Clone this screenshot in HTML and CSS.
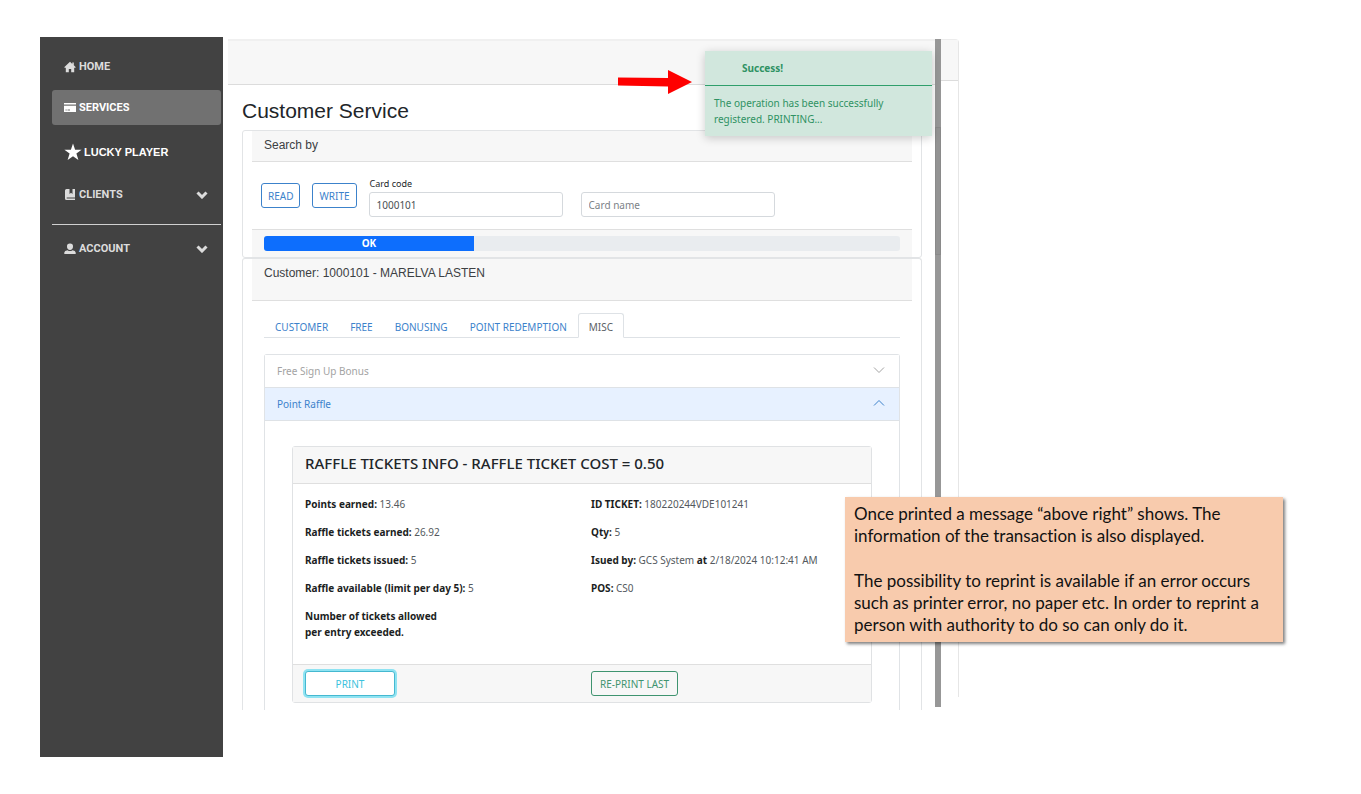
FILE: index.html
```html
<!DOCTYPE html>
<html lang="en">
<head>
<meta charset="utf-8">
<title>Customer Service</title>
<link rel="stylesheet" href="styles.css">
</head>
<body>
<div class="page">
  <nav class="sidebar">
    <a class="nav-item" href="#"><svg class="icon" viewBox="0 0 12 12"><path d="M6 .8 .2 6.200l.9.9.700-.600V11.200h3V8h2.400v3.200h3V6.500l.7.600.9-.9L9.800 4.200V1.500H8.300v1.400z"/></svg><span>HOME</span></a>
    <a class="nav-item active" href="#"><svg class="icon" viewBox="0 0 12 12"><path d="M0 1h12v1.600H0zM0 3.800h12V10H0zM1.500 7.500v1h1.200v-1zm2 0v1h2.500v-1z" fill-rule="evenodd"/></svg><span>SERVICES</span></a>
    <a class="nav-item lucky" href="#"><svg class="icon star" viewBox="0 0 18 18"><path d="M9 .5l2.100 6.200h6.500l-5.200 3.900 2 6.400L9 13.200 3.600 17l2-6.400L.4 6.700h6.500z"/></svg><span>LUCKY PLAYER</span></a>
    <a class="nav-item" href="#"><svg class="icon" viewBox="0 0 12 12"><path d="M2.500 0H5.500v5l1.500-1.200L8.500 5V0h2.500v8.500H2.700v1H11V11H2.500Q1 11 1 9.500v-8Q1 0 2.500 0z"/></svg><span>CLIENTS</span><svg class="chev" viewBox="0 0 12 8"><path d="M1.500 1.500 6 6l4.500-4.500"/></svg></a>
    <hr class="nav-line">
    <a class="nav-item" href="#"><svg class="icon" viewBox="0 0 12 12"><path d="M6 .5a3 3 0 0 1 3 3.200C9 5.500 7.800 7 6 7S3 5.500 3 3.700A3 3 0 0 1 6 .5zM.3 11V9.500Q.5 7.500 3.500 7.200 6 9 8.500 7.200q3 .3 3.200 2.300V11z"/></svg><span>ACCOUNT</span><svg class="chev" viewBox="0 0 12 8"><path d="M1.500 1.500 6 6l4.500-4.500"/></svg></a>
  </nav>

  <main class="app">
    <div class="content">
      <div class="topbar"></div>
      <h1 class="title">Customer Service</h1>
      <div class="stack">
        <section class="card">
          <h2 class="card-head">Search by</h2>
          <div class="search">
            <button class="btn blue" type="button">READ</button>
            <button class="btn blue" type="button">WRITE</button>
            <div class="field code-field">
              <label for="code">Card code</label>
              <input class="input" id="code" type="text" value="1000101">
            </div>
            <div class="field">
              <input class="input" type="text" placeholder="Card name" aria-label="Card name">
            </div>
          </div>
          <div class="card-foot"><div class="progress"><div class="bar" style="width:33%">OK</div></div></div>
        </section>

        <section class="card open">
          <h2 class="card-head tall">Customer: 1000101 - MARELVA LASTEN</h2>
          <div class="tabs">
            <a href="#">CUSTOMER</a><a href="#">FREE</a><a href="#">BONUSING</a><a href="#">POINT REDEMPTION</a><a class="current" href="#">MISC</a>
          </div>
          <div class="accordion">
            <button class="acc-head muted" type="button"><span>Free Sign Up Bonus</span><svg viewBox="0 0 12 8"><path d="M1 1.500 6 6.500l5-5"/></svg></button>
            <button class="acc-head selected" type="button"><span>Point Raffle</span><svg viewBox="0 0 12 8"><path d="M1 6.500 6 1.500l5 5"/></svg></button>
            <div class="acc-body">
              <div class="raffle">
                <h3 class="raffle-head">RAFFLE TICKETS INFO - RAFFLE TICKET COST = 0.50</h3>
                <div class="raffle-body">
                  <div class="facts">
                    <p><b>Points earned:</b> 13.46</p>
                    <p><b>Raffle tickets earned:</b> 26.92</p>
                    <p><b>Raffle tickets issued:</b> 5</p>
                    <p><b>Raffle available (limit per day 5):</b> 5</p>
                    <p><b>Number of tickets allowed<br>per entry exceeded.</b></p>
                  </div>
                  <div class="facts">
                    <p><b>ID TICKET:</b> 180220244VDE101241</p>
                    <p><b>Qty:</b> 5</p>
                    <p><b>Isued by:</b> GCS System <b>at</b> 2/18/2024 10:12:41 AM</p>
                    <p><b>POS:</b> CS0</p>
                  </div>
                </div>
                <div class="raffle-foot">
                  <div><button class="btn print" type="button">PRINT</button></div>
                  <div><button class="btn green" type="button">RE-PRINT LAST</button></div>
                </div>
              </div>
            </div>
          </div>
        </section>
      </div>

      <svg class="arrow" viewBox="0 0 74 24"><path d="M0 7.500 50 8V0l24 12-24 12v-7.500L0 15.500z"/></svg>
      <div class="toast" role="status">
        <div class="toast-head">Success!</div>
        <p class="toast-body">The operation has been successfully registered. PRINTING...</p>
      </div>
    </div>
    <div class="scroll"><div class="thumb"></div></div>
    <div class="edge"><div class="edge-top"></div></div>
  </main>

  <aside class="note">
    <p>Once printed a message “above right” shows. The<br>information of the transaction is also displayed.</p>
    <p>The possibility to reprint is available if an error occurs<br>such as printer error, no paper etc. In order to reprint a<br>person with authority to do so can only do it.</p>
  </aside>
</div>
</body>
</html>
```
FILE: styles.css
```css
* { box-sizing: border-box; }
body {
  margin: 0;
  background: #fff;
  color: #212529;
  font: 10px/16px "Noto Sans", sans-serif;
}
h1, h2, h3, p { margin: 0; font-weight: 400; }
b { font-weight: 700; color: #1b1e22; }
a { text-decoration: none; }
button, input { font: inherit; }

.page {
  position: relative;
  display: grid;
  grid-template-columns: 183px minmax(0, 368fr) 201fr;
  padding: 37px 0 37px 40px;
}

.sidebar {
  min-height: 720px;
  padding: 12px 2px 12px 12px;
  background: #424242;
  font: 700 11px/16px Roboto, sans-serif;
}
.nav-item {
  display: flex;
  align-items: center;
  gap: 3px;
  height: 35px;
  padding: 0 13px 0 12px;
  border-radius: 3px;
  color: #dcdcdc;
}
.nav-item + .nav-item { margin-top: 6px; }
.nav-item.active { background: #717171; color: #fff; }
.nav-item.lucky { gap: 2px; color: #fff; font: 700 11px/16px "Liberation Sans", sans-serif; margin-top: 9px; }
.nav-item.lucky + .nav-item { margin-top: 8px; }
.icon { width: 12px; height: 12px; fill: currentColor; flex: none; }
.icon.star { width: 18px; height: 18px; }
.chev { width: 12px; height: 8px; margin-left: auto; fill: none; stroke: currentColor; stroke-width: 3; }
.nav-line { height: 1px; margin: 12px 0 6px; border: 0; background: #d0d0d0; }

.app {
  display: grid;
  grid-template-columns: minmax(0, 1fr) 6px 18px;
  align-items: start;
  margin-left: 5px;
  padding-top: 2px;
}
.content { position: relative; }
.topbar { height: 46px; background: #f7f7f7; border-top: 2px solid #f0f0f0; border-bottom: 1px solid #dcdcdc; }
.title { margin: 11px 14px 4px; font: 21px/30px "Liberation Sans", sans-serif; }
.stack { margin: 0 13px 0 14px; }

.card { padding: 0 9px; border: 1px solid #e2e4e6; border-radius: 3px; }
.card.open { border-bottom: 0; border-radius: 3px 3px 0 0; }
.card-head {
  height: 31px;
  padding: 6px 12px;
  background: #f7f7f7;
  border-bottom: 1px solid #dfdfdf;
  color: #3c4043;
  font: 12px/17px "Liberation Sans", sans-serif;
}
.card-head.tall { height: 42px; }
.search { display: flex; align-items: flex-end; gap: 12px; height: 67px; padding: 0 9px 12px; }
.search .btn { margin-bottom: 9px; }
.btn {
  height: 25px;
  padding: 0 6px;
  background: #fff;
  border: 1px solid;
  border-radius: 3px;
}
.blue { color: #3c82cb; }
.green { padding: 0 8px; color: #3f9470; background: transparent; }
.print { width: 90px; color: #3cc2dd; border-color: #45b8d0; box-shadow: 0 0 0 2px #8fe3f2; }
.field { width: 194px; }
.code-field { margin-right: 6px; }
.field label { display: block; padding-left: 1px; font-size: 9px; line-height: 16px; }
.input {
  display: block;
  width: 100%;
  height: 25px;
  padding: 0 7px;
  border: 1px solid #d5d9dd;
  border-radius: 3px;
  background: #fff;
  color: #4a4f54;
}
.input::placeholder { color: #7c8288; opacity: 1; }
.card-foot { padding: 6px 12px; background: #f7f7f7; border-top: 1px solid #dfdfdf; }
.progress { display: flex; height: 15px; overflow: hidden; background: #e9ecef; border-radius: 3px; }
.bar { background: #0d6efd; color: #fff; font-weight: 700; line-height: 15px; text-align: center; }

.tabs { display: flex; margin: 12px 12px 16px; border-bottom: 1px solid #dee2e6; }
.tabs a {
  height: 25px;
  padding: 5px 10px 0;
  margin-bottom: -1px;
  border: 1px solid transparent;
  border-radius: 3px 3px 0 0;
  color: #3c82cb;
  line-height: 16px;
}
.tabs .current { color: #5c6166; background: #fff; border-color: #dee2e6 #dee2e6 #fff; }

.accordion { margin: 0 12px; border: 1px solid #e0e3e6; border-bottom: 0; border-radius: 3px 3px 0 0; }
.acc-head {
  display: flex;
  justify-content: space-between;
  align-items: center;
  width: 100%;
  height: 33px;
  padding: 0 14px 0 12px;
  background: #fff;
  border: 0;
  border-bottom: 1px solid #dee2e6;
}
.acc-head svg { width: 12px; height: 8px; margin-bottom: 3px; fill: none; stroke: currentColor; }
.muted { color: #a3a3a3; }
.selected { background: #e7f1ff; color: #3c82cb; }
.acc-body { padding: 25px 27px 7px; }
.raffle { border: 1px solid #e0e2e4; border-radius: 3px; }
.raffle-head {
  height: 37px;
  padding: 6px 12px;
  background: #f7f7f7;
  border-bottom: 1px solid #dfdfdf;
  font-size: 15px;
  line-height: 20px;
  font-weight: 500;
}
.raffle-body, .raffle-foot { display: grid; grid-template-columns: 1fr 1fr; gap: 12px; padding: 0 6px 0 12px; }
.raffle-body { padding-top: 12px; padding-bottom: 24px; }
.facts { display: flex; flex-direction: column; gap: 12px; color: #54595e; white-space: nowrap; }
.raffle-foot { padding-top: 6px; padding-bottom: 6px; background: #f7f7f7; border-top: 1px solid #dfdfdf; }

.scroll { height: 668px; background: #979797; padding-top: 88px; }
.thumb { height: 128px; background: #939393; border: 1px solid #8a8a8a; }
.edge { height: 658px; border-right: 1px solid #e6e6e6; border-top: 1px solid #ececec; border-radius: 0 4px 0 0; }
.edge-top { height: 41px; background: #f7f7f7; border-bottom: 1px solid #dcdcdc; }

.arrow { position: absolute; top: 31px; right: 243px; width: 74px; height: 24px; fill: #fe0000; }
.toast {
  position: absolute;
  top: 12px;
  right: 3px;
  width: 227px;
  background: #d1e7dd;
  color: #2f9263;
  box-shadow: 0 2px 9px rgba(0, 0, 0, .2);
}
.toast-head { padding: 9px 37px; border-bottom: 1px solid #2f9f6b; font-weight: 700; }
.toast-body { padding: 9px 9px 9px; }

.note {
  position: absolute;
  top: 497px;
  left: 845px;
  display: flex;
  flex-direction: column;
  gap: 23px;
  width: 438px;
  padding: 6px 9px;
  background: #f8cbad;
  color: #111;
  box-shadow: 2px 2px 3px rgba(0, 0, 0, .5);
  font: 17px/22px Lato, sans-serif;
  font-variant-ligatures: none;
  white-space: nowrap;
}
```
